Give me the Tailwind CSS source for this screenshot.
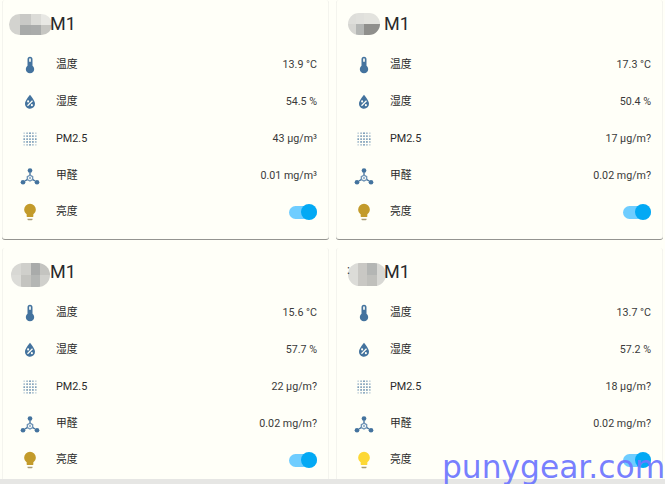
<!DOCTYPE html>
<html lang="zh-CN">
<head>
  <meta charset="UTF-8" />
  <title>M1</title>
  <script src="https://cdn.jsdelivr.net/npm/@tailwindcss/browser@4"></script>
</head>
<body class="bg-[#fffff8] h-[484px] w-[665px] overflow-hidden relative font-['Roboto','Noto_Sans_CJK_SC',sans-serif]">
  <div id="grid" class="grid grid-cols-[327px_327px] gap-x-[7px] gap-y-[9px] pl-[2px]"></div>
  <div class="absolute left-0 right-0 top-[479px] h-[5px] bg-[#e6e6e4]"></div>
  <div class="absolute left-[442px] top-[449px] text-[31.3px] leading-[36px] text-[#6f78ff]/95 font-['DejaVu_Sans',sans-serif] whitespace-nowrap">punygear.com</div>

<script>
  // 四张卡片的数据
  const cards = [
    { v: ["13.9 °C", "54.5 %", "43 µg/m³", "0.01 mg/m³"], bulb: "#c39b2b", top: ["#d3d3cf", "#c9c9c6", "#dcdcd8", "#e8e8e4"], bottom: ["#d3d3cf", "#a8aaa9", "#aaacab", "#c6c6c2"], x: 9, w: 43, y: 14, h: 21, speck: "" },
    { v: ["17.3 °C", "50.4 %", "17 µg/m?", "0.02 mg/m?"], bulb: "#c39b2b", top: ["#dededa", "#e0e0dc", "#e3e3de", "#e3e3de"], bottom: ["#d6d6d2", "#b4b6b4", "#8f8f8c", "#8f8f8c"], x: 14, w: 32, y: 13, h: 22, speck: "" },
    { v: ["15.6 °C", "57.7 %", "22 µg/m?", "0.02 mg/m?"], bulb: "#c39b2b", top: ["#d8d8d4", "#cfcfcb", "#a9abaa", "#c4c4c0"], bottom: ["#dcdcd8", "#c4c4c0", "#b4b6b4", "#d0d0cc"], x: 11, w: 39, y: 15, h: 24, speck: "" },
    { v: ["13.7 °C", "57.2 %", "18 µg/m?", "0.02 mg/m?"], bulb: "#fdd835", top: ["#dcdcd8", "#c9c8c4", "#b4b6b4", "#d8d8d4"], bottom: ["#dcdcd8", "#c9c8c4", "#c0c0bc", "#d8d8d4"], x: 14, w: 38, y: 15, h: 23, speck: ":" }
  ];

  const thermo = '<path d="M15 13V5A3 3 0 0 0 9 5V13A5 5 0 1 0 15 13M12 4A1 1 0 0 1 13 5V8H11V5A1 1 0 0 1 12 4Z" fill="#44739e"/>';
  const drop = '<path d="M12,3.25C12,3.25 6,10 6,14C6,17.32 8.69,20 12,20A6,6 0 0,0 18,14C18,10 12,3.25 12,3.25M14.47,9.97L15.53,11.03L9.53,17.03L8.47,15.97M9.75,10A1.25,1.25 0 0,1 11,11.25A1.25,1.25 0 0,1 9.75,12.5A1.25,1.25 0 0,1 8.5,11.25A1.25,1.25 0 0,1 9.75,10M14.25,14.5A1.25,1.25 0 0,1 15.5,15.75A1.25,1.25 0 0,1 14.25,17A1.25,1.25 0 0,1 13,15.75A1.25,1.25 0 0,1 14.25,14.5Z" fill="#44739e"/>';
  const molecule = '<g fill="#44739e"><circle cx="12" cy="5.5" r="2.8"/><circle cx="3.6" cy="19.5" r="2.8"/><circle cx="20.4" cy="19.5" r="2.8"/></g><g stroke="#44739e" stroke-width="1.6" fill="none"><path d="M12 8V11M6 18L9 16M18 18L15 16"/><path d="M12 11L15.2 12.8V16.2L12 18L8.8 16.2V12.8Z" stroke="#6f93b5"/></g><circle cx="12" cy="14.5" r="1.5" fill="#9db9d2"/>';
  const bulb = c => '<path d="M12,2A7,7 0 0,0 5,9C5,11.38 6.19,13.47 8,14.74V17A1,1 0 0,0 9,18H15A1,1 0 0,0 16,17V14.74C17.81,13.47 19,11.38 19,9A7,7 0 0,0 12,2Z" fill="' + c + '"/><path d="M9,21A1,1 0 0,0 10,22H14A1,1 0 0,0 15,21V20H9V21Z" fill="#a89a72"/>';

  // PM2.5 的点阵，越靠外越淡
  function dots() {
    let s = "";
    for (let y = 0; y < 5; y++) {
      for (let x = 0; x < 5; x++) {
        const d = Math.abs(x - 2) + Math.abs(y - 2);
        const o = d === 4 ? 0.3 : d === 3 ? 0.55 : 0.85;
        s += '<circle cx="' + (5 + x * 3.5) + '" cy="' + (5 + y * 3.5) + '" r="1.05" fill="#44739e" opacity="' + o + '"/>';
      }
    }
    return s;
  }

  function row(icon, label, right) {
    return `
      <div class="flex items-center h-[36.75px] pl-[17px] pr-[11px]">
        <svg viewBox="0 0 24 24" class="w-[20px] h-[20px] shrink-0">${icon}</svg>
        <span class="ml-[16px] text-[10.8px] text-[#2b2b2b]">${label}</span>
        <div class="ml-auto text-[10.7px] text-[#3a3a3a]">${right}</div>
      </div>`;
  }

  const toggle = `
    <div class="relative w-[28px] h-[16px]">
      <div class="absolute left-0 top-[2px] w-[28px] h-[13px] rounded-full bg-[#6fcdff]"></div>
      <div class="absolute right-0 top-0 w-[16px] h-[16px] rounded-full bg-[#03a9f4]"></div>
    </div>`;

  document.getElementById("grid").innerHTML = cards.map(c => `
    <div class="h-[239px] bg-[#fffff8] rounded-[3px] border-x border-[#f4f4ee] shadow-[0_1px_0_rgba(0,0,0,0.42)]">
      <div class="flex items-center h-[47px] relative">
        <div class="grid grid-cols-4 grid-rows-2 rounded-full overflow-hidden absolute" style="left:${c.x - 3}px;top:${c.y}px;width:${c.w}px;height:${c.h}px">
          ${c.top.concat(c.bottom).map(b => `<div style="background:${b}"></div>`).join("")}
        </div>
        <span class="absolute left-[10px] top-[14px] text-[12px] leading-[16px] text-[#333333]">${c.speck}</span>
        <span class="ml-[47px] text-[18px] text-[#2a2a2a] relative">M1</span>
      </div>
      ${row(thermo, "温度", c.v[0])}
      ${row(drop, "湿度", c.v[1])}
      ${row(dots(), "PM2.5", c.v[2])}
      ${row(molecule, "甲醛", c.v[3])}
      ${row(bulb(c.bulb), "亮度", toggle)}
    </div>`).join("");
</script>
</body>
</html>
